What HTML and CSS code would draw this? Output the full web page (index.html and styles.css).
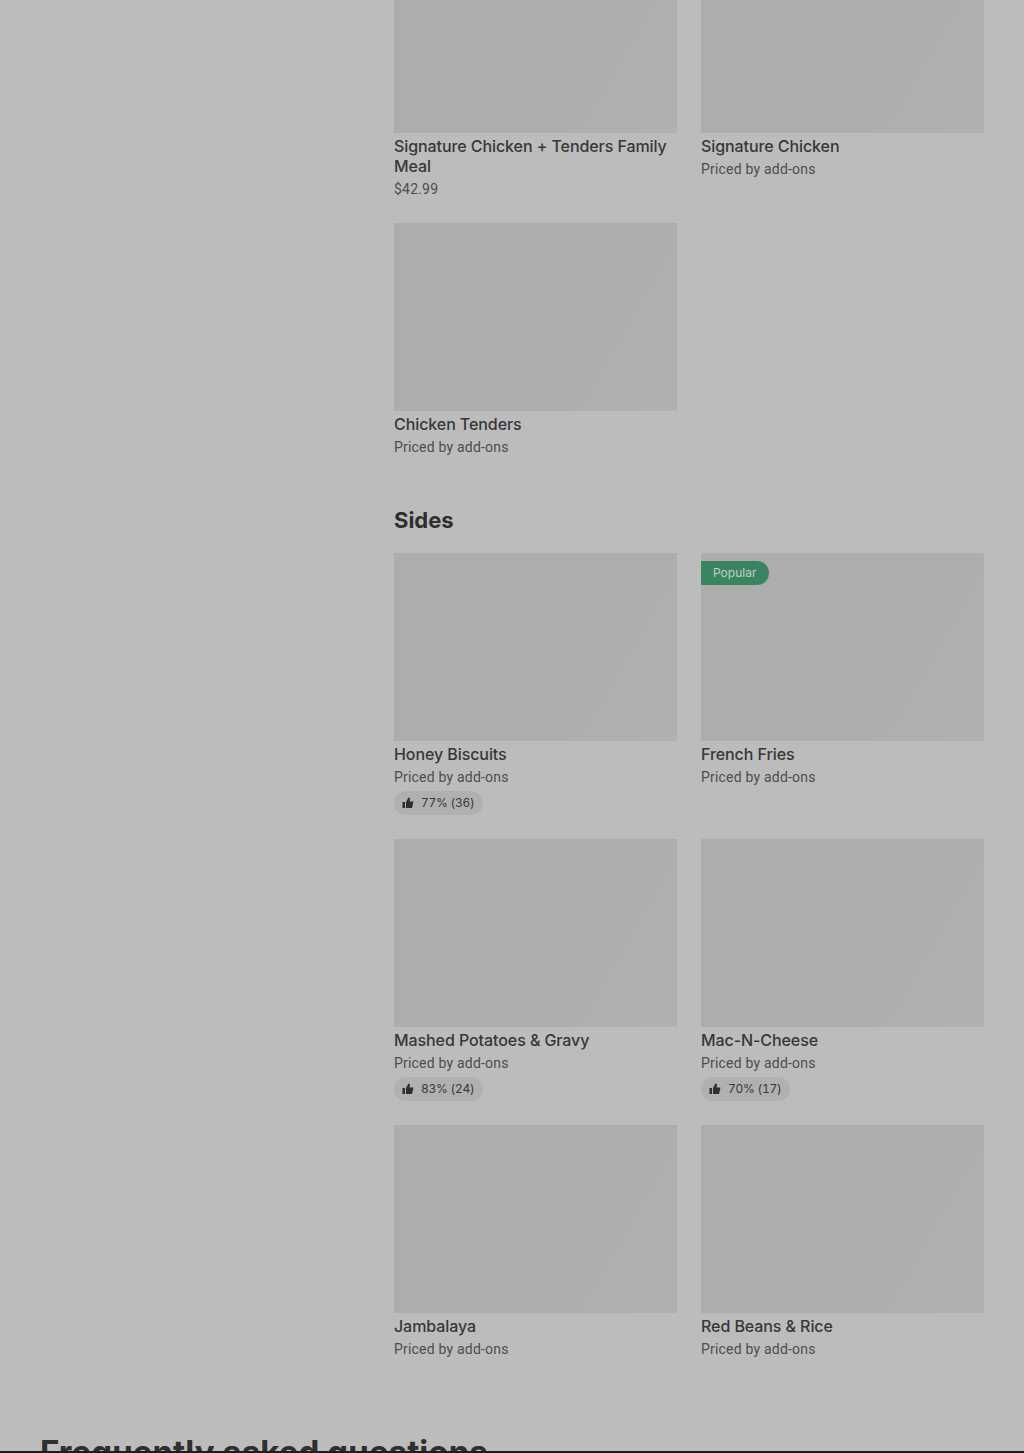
FILE: index.html
```html
<!DOCTYPE html>
<html lang="en">
<head>
<meta charset="utf-8">
<title>Menu</title>
<link rel="stylesheet" href="styles.css">
</head>
<body>
<div class="page">
  <main class="menu">
    <section class="section">
      <div class="grid">
        <article class="card">
          <div class="thumb"></div>
          <h3 class="name">Signature Chicken + Tenders Family Meal</h3>
          <p class="price">$42.99</p>
        </article>
        <article class="card">
          <div class="thumb"></div>
          <h3 class="name">Signature Chicken</h3>
          <p class="price">Priced by add-ons</p>
        </article>
        <article class="card">
          <div class="thumb"></div>
          <h3 class="name">Chicken Tenders</h3>
          <p class="price">Priced by add-ons</p>
        </article>
      </div>
    </section>
    <section class="section">
      <h2 class="section-title">Sides</h2>
      <div class="grid">
        <article class="card">
          <div class="thumb"></div>
          <h3 class="name">Honey Biscuits</h3>
          <p class="price">Priced by add-ons</p>
          <span class="rating"><svg class="thumb-icon" viewBox="0 0 24 24"><path d="M1 10h5v12H1z"/><path d="M8 22V10l5-9c2 0 3 1.500 3 3.500L15 9h8l-3 13z"/></svg>77% (36)</span>
        </article>
        <article class="card">
          <div class="thumb"><span class="badge">Popular</span></div>
          <h3 class="name">French Fries</h3>
          <p class="price">Priced by add-ons</p>
        </article>
        <article class="card">
          <div class="thumb"></div>
          <h3 class="name">Mashed Potatoes &amp; Gravy</h3>
          <p class="price">Priced by add-ons</p>
          <span class="rating"><svg class="thumb-icon" viewBox="0 0 24 24"><path d="M1 10h5v12H1z"/><path d="M8 22V10l5-9c2 0 3 1.500 3 3.500L15 9h8l-3 13z"/></svg>83% (24)</span>
        </article>
        <article class="card">
          <div class="thumb"></div>
          <h3 class="name">Mac-N-Cheese</h3>
          <p class="price">Priced by add-ons</p>
          <span class="rating"><svg class="thumb-icon" viewBox="0 0 24 24"><path d="M1 10h5v12H1z"/><path d="M8 22V10l5-9c2 0 3 1.500 3 3.500L15 9h8l-3 13z"/></svg>70% (17)</span>
        </article>
        <article class="card">
          <div class="thumb"></div>
          <h3 class="name">Jambalaya</h3>
          <p class="price">Priced by add-ons</p>
        </article>
        <article class="card">
          <div class="thumb"></div>
          <h3 class="name">Red Beans &amp; Rice</h3>
          <p class="price">Priced by add-ons</p>
        </article>
      </div>
    </section>
  </main>
  <section class="faq">
    <h2 class="faq-title">Frequently asked questions</h2>
  </section>
</div>
</body>
</html>
```
FILE: styles.css
```css
* { box-sizing: border-box; }
html, body { margin: 0; height: 100%; }
body {
  background: #bcbcbc;
  color: #2f2f2f;
  font-family: Inter, "Liberation Sans", sans-serif;
  overflow: hidden;
}
.page {
  height: 1453px;
  overflow: hidden;
  border-bottom: 2px solid #1f1f1f;
}
.menu {
  margin: -55px 40px 0 394px;
  display: flex;
  flex-direction: column;
  gap: 47px;
}
.grid {
  display: grid;
  grid-template-columns: 283px 283px;
  column-gap: 24px;
  row-gap: 24px;
}
.card { display: flex; flex-direction: column; align-items: flex-start; min-width: 0; }
.thumb {
  position: relative;
  width: 100%;
  height: 188px;
  background: linear-gradient(120deg, #adadad 71%, #afafaf 74%, #afafaf 88%, #b0b0b0 92%);
  margin-bottom: 3px;
}
.name {
  margin: 0;
  font-size: 16px;
  line-height: 20px;
  font-weight: 500;
  letter-spacing: -0.08px;
  color: #373737;
}
.price {
  margin: 3px 0 0;
  font-family: Roboto, "Liberation Sans", sans-serif;
  font-size: 14px;
  line-height: 20px;
  letter-spacing: 0.2px;
  color: #4d4d4d;
}
.rating {
  display: inline-flex;
  align-items: center;
  gap: 7px;
  height: 24px;
  margin-top: 4px;
  padding: 0 8px 2px;
  border-radius: 12px;
  background: #b0b0b0;
  font-size: 12px;
  font-variant-numeric: tabular-nums;
  letter-spacing: -0.25px;
  color: #373737;
}
.thumb-icon { width: 12px; height: 12px; margin-top: 2px; fill: #2f2f2f; }
.badge {
  position: absolute;
  top: 8px;
  left: 0;
  height: 24px;
  padding: 0 13px 2px 12px;
  display: flex;
  align-items: center;
  border-radius: 0 12px 12px 0;
  background: #3a8560;
  color: #bfcfc6;
  font-size: 12px;
}
.section-title {
  margin: 0 0 17px;
  font-size: 22px;
  line-height: 32px;
  font-weight: 700;
  color: #2f2f2f;
}
.faq { padding: 0 40px; margin-top: 73px; }
.faq-title {
  margin: 0;
  font-size: 33px;
  line-height: 40px;
  font-weight: 700;
  letter-spacing: 0.08px;
  color: #2f2f2f;
}
```
